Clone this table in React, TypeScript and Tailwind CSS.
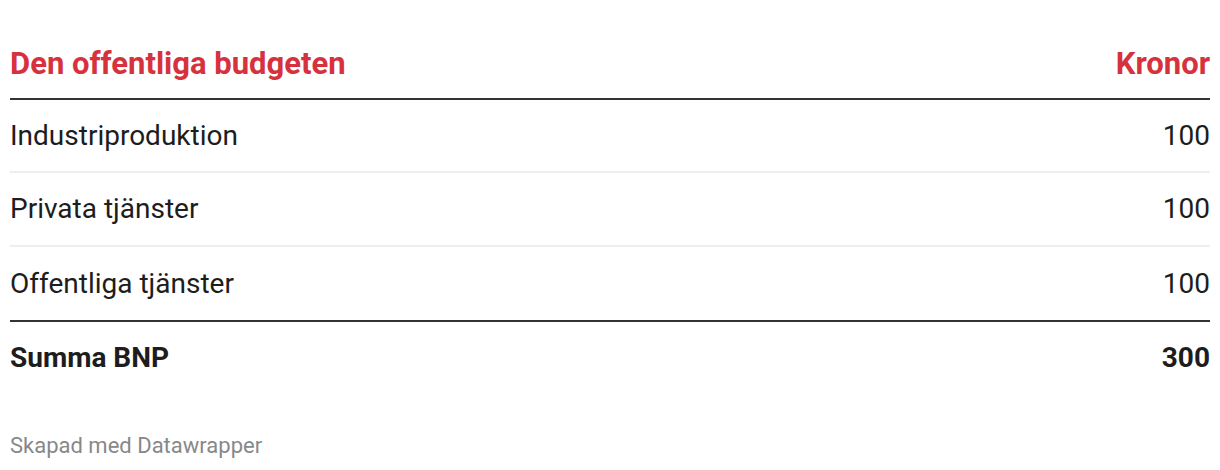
export default function App() {
  const rows: [string, string, string][] = [
    ["Industriproduktion", "100", "h-[73px] border-b-2 border-[#eeeeee]"],
    ["Privata tjänster", "100", "h-[74px] border-b-2 border-[#eeeeee]"],
    ["Offentliga tjänster", "100", "h-[75px] border-b-2 border-[#333333]"],
  ];
  return (
    <div className="w-[1220px] h-[470px] bg-white px-[10px] text-[#1d1d1d]" style={{ fontFamily: "Roboto, sans-serif" }}>
      <div className="flex justify-between items-center h-[100px] pt-[30px] border-b-2 border-[#333] text-[31px] font-bold text-[#d6323e]">
        <span>Den offentliga budgeten</span>
        <span>Kronor</span>
      </div>
      {rows.map(([l, v, c]) => (
        <div key={l} className={"flex justify-between items-center text-[28px] " + c}>
          <span>{l}</span>
          <span>{v}</span>
        </div>
      ))}
      <div className="flex justify-between items-center h-[72px] text-[28px] font-bold">
        <span>Summa BNP</span>
        <span>300</span>
      </div>
      <div className="mt-[38px] text-[22px] leading-[28px] text-[#888]">Skapad med Datawrapper</div>
    </div>
  );
}
